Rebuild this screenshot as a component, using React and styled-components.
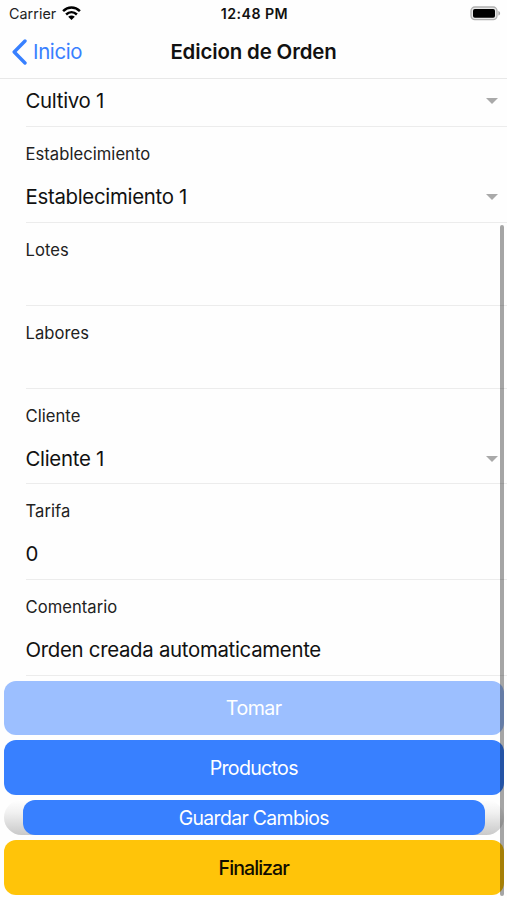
import styled, { createGlobalStyle } from "styled-components";

const fields = [
    { label: "Establecimiento", value: "Establecimiento 1", select: true },
    { label: "Lotes" },
    { label: "Labores" },
    { label: "Cliente", value: "Cliente 1", select: true },
    { label: "Tarifa", value: "0" },
    { label: "Comentario", value: "Orden creada automaticamente" },
];

const Caret = () => (
    <CaretIcon viewBox="0 0 12 6">
        <path d="M0 0h12L6 6z" fill="#a9a9a9" />
    </CaretIcon>
);

const App = () => {

    return (
        <>
            <GlobalStyle />
            <Screen>
                <StatusBar>
                    <Carrier>
                        <span>Carrier</span>
                        <svg width="19" height="15" viewBox="0 0 19 15" fill="none" stroke="#000" strokeWidth="2.5">
                            <path d="M1.1 5.2C6 .4 13 .4 17.9 5.2" />
                            <path d="M4.1 8.5c3.2-3 7.6-3 10.8 0" />
                            <path d="M6.2 10.8c2-1.7 4.6-1.7 6.6 0L9.5 14z" fill="#000" stroke="none" />
                        </svg>
                    </Carrier>
                    <Clock>12:48 PM</Clock>
                    <Battery>
                        <svg width="31" height="15" viewBox="0 0 31 15">
                            <rect x="1" y="1" width="26" height="12.6" rx="3.8" fill="#e8e8e8" stroke="#b0b0b0" strokeWidth="1.3" />
                            <rect x="3" y="3" width="22" height="8.8" rx="1.8" fill="#000" />
                            <path d="M28.4 5v4.6c1-.4 1.7-1.2 1.7-2.3s-.7-1.9-1.7-2.3z" fill="#a5a5a5" />
                        </svg>
                    </Battery>
                </StatusBar>
                <Toolbar>
                    <BackButton>
                        <svg width="15" height="26" viewBox="0 0 15 26" fill="none" stroke="#3880ff" strokeWidth="3.4" strokeLinecap="round" strokeLinejoin="round">
                            <path d="M13 2L2.2 13L13 24" />
                        </svg>
                        Inicio
                    </BackButton>
                    <Title>Edicion de Orden</Title>
                    <span />
                </Toolbar>
                <Form>
                    <FirstField>
                        <Value>Cultivo 1</Value>
                        <Caret />
                    </FirstField>
                    {fields.map((field) => (
                        <Field key={field.label} $empty={!field.value}>
                            <Label>{field.label}</Label>
                            {field.value && (
                                <ValueRow>
                                    <Value>{field.value}</Value>
                                    {field.select && <Caret />}
                                </ValueRow>
                            )}
                        </Field>
                    ))}
                </Form>
                <Buttons>
                    <ActionButton $disabled>Tomar</ActionButton>
                    <ActionButton>Productos</ActionButton>
                    <SaveButton>
                        <SaveInner>Guardar Cambios</SaveInner>
                    </SaveButton>
                    <ActionButton $warning>Finalizar</ActionButton>
                </Buttons>
                <ScrollThumb />
            </Screen>
        </>
    );
};

export default App;

const GlobalStyle = createGlobalStyle`
    * {
        box-sizing: border-box;
    }

    body {
        margin: 0;
        background: #fefefe;
        font-family: Inter, "Liberation Sans", sans-serif;
        overflow: hidden;
    }

    svg {
        display: block;
        flex-shrink: 0;
    }

    button {
        font-family: inherit;
        border: none;
        padding: 0;
    }
`

const Screen = styled.div`
    position: relative;
    display: flex;
    flex-direction: column;
    width: 507px;
    height: 900px;
    overflow: hidden;
    color: #111;
`

const StatusBar = styled.div`
    display: grid;
    grid-template-columns: 1fr auto 1fr;
    align-items: center;
    height: 27px;
    padding: 0 6px 0 9px;
`

const Carrier = styled.div`
    display: flex;
    align-items: center;
    gap: 6px;
    font-size: 14.3px;
    letter-spacing: 0.05px;
    color: #222;
`

const Clock = styled.div`
    font-size: 14.2px;
    font-weight: 600;
    letter-spacing: 0.45px;
    margin-right: 1px;
`

const Battery = styled.div`
    display: flex;
    justify-content: flex-end;
`

const Toolbar = styled.header`
    display: grid;
    grid-template-columns: 1fr auto 1fr;
    align-items: center;
    height: 52px;
    padding: 0 12px 2px;
    border-bottom: 1px solid #e8e8e8;
`

const BackButton = styled.button`
    display: flex;
    align-items: center;
    gap: 6px;
    background: none;
    color: #3880ff;
    font-size: 20.4px;
    letter-spacing: -0.35px;
`

const Title = styled.div`
    font-size: 20.4px;
    font-weight: 600;
    letter-spacing: -0.12px;
`

const Form = styled.div`
    display: flex;
    flex-direction: column;
    padding-left: 25.5px;
`

const FirstField = styled.div`
    display: flex;
    align-items: center;
    justify-content: space-between;
    height: 48px;
    padding: 0 9px 4px 0;
    border-bottom: 1px solid #ececec;
`

const Field = styled.div`
    height: ${(props) => (props.$empty ? "83px" : "95.7px")};
    padding-top: 17px;
    border-bottom: 1px solid #ececec;
`

const Label = styled.div`
    font-size: 16.6px;
    line-height: 20px;
    letter-spacing: 0.04px;
    color: #222;
`

const ValueRow = styled.div`
    display: flex;
    align-items: center;
    justify-content: space-between;
    margin-top: 20px;
    padding-right: 9px;
`

const Value = styled.div`
    font-size: 20.4px;
    line-height: 26px;
    letter-spacing: -0.3px;
    white-space: nowrap;
`

const CaretIcon = styled.svg`
    width: 12px;
    height: 6px;
`

const Buttons = styled.div`
    display: flex;
    flex-direction: column;
    gap: 5px;
    padding: 4.9px 3px 0 3.5px;
`

const ActionButton = styled.button`
    height: 54.7px;
    border-radius: 12px;
    font-size: 19.6px;
    font-weight: ${(props) => (props.$warning ? 500 : 400)};
    letter-spacing: ${(props) => (props.$warning ? "-0.95px" : props.$disabled ? "-0.5px" : "-0.7px")};
    background: ${(props) => (props.$warning ? "#ffc409" : props.$disabled ? "#9cbfff" : "#3880ff")};
    color: ${(props) => (props.$warning ? "#110d00" : "#fff")};
`

const SaveButton = styled.div`
    height: 35.4px;
    padding: 0 19.5px;
    border-radius: 18px;
    background: linear-gradient(#fff, #f1f1f1 35%, #c9c9c9);
`

const SaveInner = styled.button`
    display: block;
    width: 100%;
    height: 100%;
    border-radius: 12px;
    background: #3880ff;
    color: #fff;
    font-size: 19.4px;
    letter-spacing: -0.65px;
`

// overlay scroll indicator, sits on top of the content
const ScrollThumb = styled.div`
    position: absolute;
    top: 225px;
    right: 3.5px;
    width: 3.5px;
    height: 671px;
    border-radius: 2px;
    background: rgba(0, 0, 0, 0.35);
`
